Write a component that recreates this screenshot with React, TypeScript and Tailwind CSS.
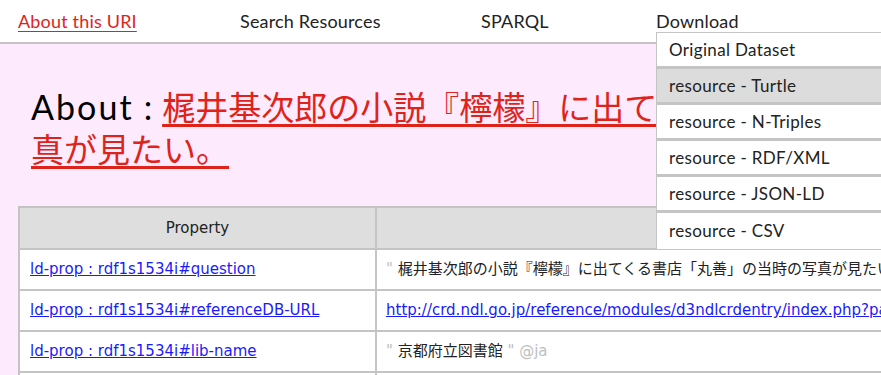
import React from "react";

const NAV = [
  { label: "About this URI", width: "w-[222px]", active: true },
  { label: "Search Resources", width: "w-[241px]", active: false },
  { label: "SPARQL", width: "w-[175px]", active: false },
  { label: "Download", width: "w-[200px]", active: false },
];

const DOWNLOADS = [
  "Original Dataset",
  "resource - Turtle",
  "resource - N-Triples",
  "resource - RDF/XML",
  "resource - JSON-LD",
  "resource - CSV",
];

const ROWS = [
  {
    prop: "ld-prop : rdf1s1534i#question",
    kind: "literal",
    value: "梶井基次郎の小説『檸檬』に出てくる書店「丸善」の当時の写真が見たい。",
  },
  {
    prop: "ld-prop : rdf1s1534i#referenceDB-URL",
    kind: "link",
    value: "http://crd.ndl.go.jp/reference/modules/d3ndlcrdentry/index.php?page=ref_view&id=1000012345",
  },
  {
    prop: "ld-prop : rdf1s1534i#lib-name",
    kind: "lang",
    value: "京都府立図書館",
  },
];

const geo = { fontFamily: "Lato, 'Noto Sans CJK JP', sans-serif" };
const table = { fontFamily: "'DejaVu Sans', 'Noto Sans CJK JP', sans-serif" };

export default function App() {
  return (
    <div className="relative w-[881px] h-[375px] overflow-hidden bg-[#fdebfd]" style={geo}>
      <nav className="w-[1200px] h-[44px] bg-white border-b-2 border-[#c4c4c4] flex items-center pl-[18px] text-[18px] text-[#222] tracking-[0.01em]">
        {NAV.map((n) => (
          <div key={n.label} className={n.width}>
            {n.active ? (
              <a href="#" className="text-[#e0231a] underline underline-offset-[3px] decoration-1">
                {n.label}
              </a>
            ) : (
              <span>{n.label}</span>
            )}
          </div>
        ))}
      </nav>

      <div className="absolute left-[656px] top-[32px] w-[226px] bg-white border border-[#c4c4c4] flex flex-col text-[17px] text-[#222] tracking-[0.02em]">
        {DOWNLOADS.map((d, i) => (
          <div
            key={d}
            className={`h-[36px] flex items-center pl-[12px] border-[#c4c4c4] ${i < DOWNLOADS.length - 1 ? "border-b-[3px]" : ""} ${i === 1 ? "bg-[#dcdcdc]" : "bg-white"}`}
          >
            {d}
          </div>
        ))}
      </div>

      <main className="w-[1200px] pl-[18px]">
        <h1 className="pl-[13px] pt-[42px] text-[34px] leading-[42px] text-black font-normal">
          <span className="tracking-[0.06em]">About</span>
          <span className="px-[10px]">:</span>
          <a href="#" className="text-[#e0231a] underline underline-offset-[4px] decoration-[3px] text-[33px]">
            梶井基次郎の小説『檸檬』に出てくる書店「丸善」の当時の写
            <br />
            真が見たい。
          </a>
        </h1>

        <table className="mt-[36px] border-collapse border-2 border-[#c4c4c4] text-[15px] text-[#222]" style={table}>
          <thead>
            <tr className="bg-[#dedede] h-[42px]">
              <th className="w-[357px] border-2 border-[#c4c4c4] font-normal">Property</th>
              <th className="w-[800px] border-2 border-[#c4c4c4] font-normal">Value</th>
            </tr>
          </thead>
          <tbody>
            {ROWS.map((r) => (
              <tr key={r.prop} className="bg-white h-[41px]">
                <td className="border-2 border-[#c4c4c4] pl-[10px]">
                  <a href="#" className="text-[#1a1aff] underline">{r.prop}</a>
                </td>
                <td className="border-2 border-[#c4c4c4] pl-[9px] whitespace-nowrap">
                  {r.kind === "link" ? (
                    <a href="#" className="text-[#1a1aff] underline">{r.value}</a>
                  ) : (
                    <span>
                      <span className="text-[#c0c0c0]">"</span> {r.value}
                      {r.kind === "lang" && (
                        <>
                          {" "}<span className="text-[#c0c0c0]">" @ja</span>
                        </>
                      )}
                    </span>
                  )}
                </td>
              </tr>
            ))}
            <tr className="bg-white h-[41px]">
              <td className="border-2 border-[#c4c4c4]"></td>
              <td className="border-2 border-[#c4c4c4]"></td>
            </tr>
          </tbody>
        </table>
      </main>
    </div>
  );
}
